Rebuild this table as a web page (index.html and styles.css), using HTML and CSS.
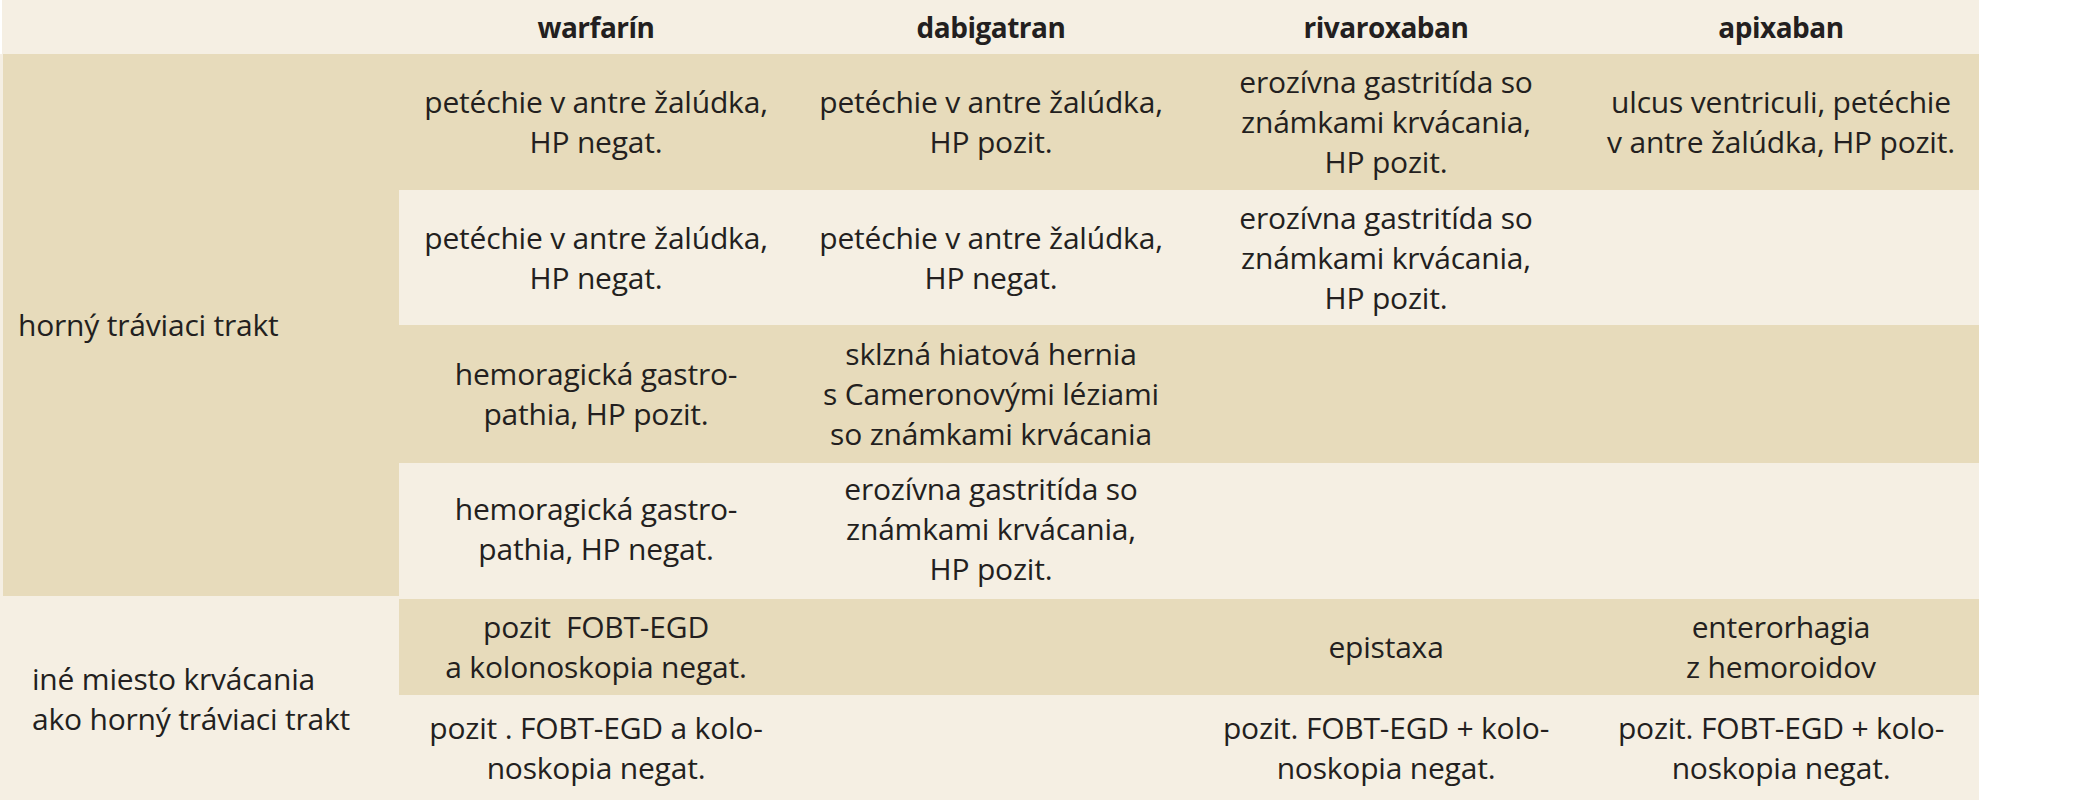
FILE: index.html
```html
<!DOCTYPE html>
<html lang="sk">
<head>
<meta charset="utf-8">
<title>Tabuľka</title>
<link rel="stylesheet" href="styles.css">
</head>
<body>
<table class="tbl">
  <colgroup>
    <col class="c-label">
    <col class="c-drug">
    <col class="c-drug">
    <col class="c-drug">
    <col class="c-drug">
  </colgroup>
  <thead>
    <tr class="head">
      <th></th>
      <th>warfarín</th>
      <th>dabigatran</th>
      <th>rivaroxaban</th>
      <th>apixaban</th>
    </tr>
  </thead>
  <tbody>
    <tr class="r1 tan">
      <td class="label label-1" rowspan="4">horný tráviaci trakt</td>
      <td>petéchie v antre žalúdka,<br>HP negat.</td>
      <td>petéchie v antre žalúdka,<br>HP pozit.</td>
      <td>erozívna gastritída so<br>známkami krvácania,<br>HP pozit.</td>
      <td>ulcus ventriculi, petéchie<br>v antre žalúdka, HP pozit.</td>
    </tr>
    <tr class="r2 light">
      <td>petéchie v antre žalúdka,<br>HP negat.</td>
      <td>petéchie v antre žalúdka,<br>HP negat.</td>
      <td>erozívna gastritída so<br>známkami krvácania,<br>HP pozit.</td>
      <td></td>
    </tr>
    <tr class="r3 tan">
      <td>hemoragická gastro-<br>pathia, HP pozit.</td>
      <td>sklzná hiatová hernia<br>s Cameronovými léziami<br>so známkami krvácania</td>
      <td></td>
      <td></td>
    </tr>
    <tr class="r4 light">
      <td>hemoragická gastro-<br>pathia, HP negat.</td>
      <td>erozívna gastritída so<br>známkami krvácania,<br>HP pozit.</td>
      <td></td>
      <td></td>
    </tr>
    <tr class="r5 tan group-start">
      <td class="label label-2" rowspan="2">iné miesto krvácania<br>ako horný tráviaci trakt</td>
      <td>pozit&nbsp; FOBT-EGD<br>a kolonoskopia negat.</td>
      <td></td>
      <td>epistaxa</td>
      <td>enterorhagia<br>z hemoroidov</td>
    </tr>
    <tr class="r6 light">
      <td>pozit . FOBT-EGD a kolo-<br>noskopia negat.</td>
      <td></td>
      <td>pozit. FOBT-EGD + kolo-<br>noskopia negat.</td>
      <td>pozit. FOBT-EGD + kolo-<br>noskopia negat.</td>
    </tr>
  </tbody>
</table>
</body>
</html>
```

FILE: styles.css
```css
html, body {
  margin: 0;
  padding: 0;
  background: #ffffff;
}

body {
  font-family: "Open Sans", "Noto Sans", sans-serif;
  color: #231f20;
}

.tbl {
  border-collapse: collapse;
  table-layout: fixed;
  width: 1978px;
  font-size: 30px;
  line-height: 40px;
  letter-spacing: -0.2px;
}

.c-label { width: 397px; }
.c-drug { width: 395px; }

.tbl th,
.tbl td {
  padding: 0 4px;
  text-align: center;
  vertical-align: middle;
  border: 0;
}

.head {
  background: #f5efe3;
  height: 54px;
}

.head th {
  font-weight: 700;
  font-size: 28px;
  letter-spacing: -0.5px;
}

.tan td { background: #e7dbbb; }
.light td { background: #f5efe3; }

.r1 { height: 136px; }
.r2 { height: 135px; }
.r3 { height: 138px; }
.r4 { height: 134px; }
.r5 { height: 98px; }
.r6 { height: 105px; }

.group-start td { border-top: 3px solid #f5efe3; }

.tbl td.label {
  text-align: left;
  border-left: 3px solid #f5efe3;
}

.tbl td.label-1 {
  background: #e7dbbb;
  padding-left: 15px;
}

.tbl td.label-2 {
  background: #f5efe3;
  padding-left: 29px;
}
```
